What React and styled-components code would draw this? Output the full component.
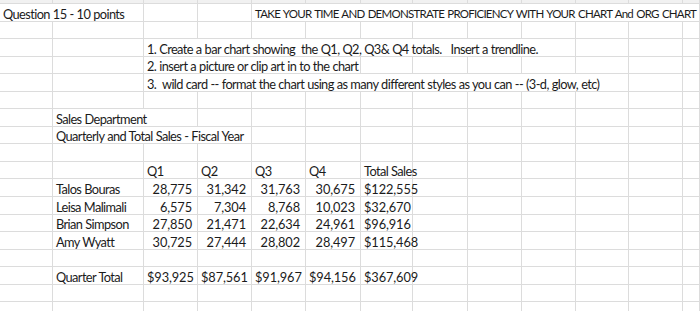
import styled, { createGlobalStyle } from "styled-components";

const GlobalStyle = createGlobalStyle`
  html, body {
    margin: 0;
    padding: 0;
    background: #ffffff;
  }
  body {
    font-family: Lato, "Liberation Sans", sans-serif;
    color: #1b1b1b;
  }
`;

const COLS = [53, 91, 54, 54, 54, 55, 52, 55, 54, 54, 53, 54, 17];

const Sheet = styled.div`
  width: 700px;
  height: 311px;
  overflow: hidden;
  display: grid;
  grid-template-columns: ${COLS.map((w) => w + "px").join(" ")};
  grid-template-rows: 4px;
  grid-auto-rows: 17.55px;
  background: #ffffff;
`;

const spacing = (p) => {
  if (p.$num) return "-0.1px";
  if (p.$caps) return "-0.75px";
  return "-0.6px";
};

const Cell = styled.div`
  grid-column: span ${(p) => p.$span || 1};
  box-sizing: border-box;
  border-right: 1px solid #dcdcdc;
  border-bottom: 1px solid #dcdcdc;
  background: ${(p) => (p.$strip ? "#f1f1f1" : "transparent")};
  display: flex;
  align-items: flex-end;
  justify-content: ${(p) => (p.$align === "right" ? "flex-end" : "flex-start")};
  padding: ${(p) => (p.$align === "right" ? "0 5px 0 0" : "0 0 0 3px")};
  font-size: ${(p) => (p.$caps ? "11.5px" : "12.8px")};
  line-height: 14px;
  letter-spacing: ${spacing};
  word-spacing: ${(p) => (p.$caps ? "1px" : "0.3px")};
  white-space: pre;
  overflow: visible;
`;

const names = [
  ["Talos Bouras", "28,775", "31,342", "31,763", "30,675", "$122,555"],
  ["Leisa Malimali", "6,575", "7,304", "8,768", "10,023", "$32,670"],
  ["Brian Simpson", "27,850", "21,471", "22,634", "24,961", "$96,916"],
  ["Amy Wyatt", "30,725", "27,444", "28,802", "28,497", "$115,468"],
];

const blank = (n) => Array.from({ length: n }, () => ({}));

const rows = [
  [
    { span: 2, text: "Question 15 - 10 points" },
    {},
    {},
    { span: 9, caps: true, text: "TAKE YOUR TIME AND DEMONSTRATE PROFICIENCY WITH YOUR CHART And ORG CHART" },
  ],
  blank(13),
  [{}, {}, { span: 8, text: "1. Create a bar chart showing  the Q1, Q2, Q3& Q4 totals.   Insert a trendline." }, ...blank(3)],
  [{}, {}, { span: 4, text: "2. insert a picture or clip art in to the chart" }, ...blank(7)],
  [{}, {}, { span: 9, text: "3.  wild card -- format the chart using as many different styles as you can -- (3-d, glow, etc)" }, ...blank(2)],
  blank(13),
  [{}, { span: 2, text: "Sales Department" }, ...blank(10)],
  [{}, { span: 3, text: "Quarterly and Total Sales - Fiscal Year" }, ...blank(9)],
  blank(13),
  [{}, {}, { text: "Q1" }, { text: "Q2" }, { text: "Q3" }, { text: "Q4" }, { text: "Total Sales" }, ...blank(6)],
  ...names.map(([name, q1, q2, q3, q4, total]) => [
    {},
    { text: name },
    { text: q1, align: "right", num: true },
    { text: q2, align: "right", num: true },
    { text: q3, align: "right", num: true },
    { text: q4, align: "right", num: true },
    { text: total, num: true },
    ...blank(6),
  ]),
  blank(13),
  [
    {},
    { text: "Quarter Total" },
    ...["$93,925", "$87,561", "$91,967", "$94,156", "$367,609"].map((t) => ({ text: t, num: true })),
    ...blank(6),
  ],
  blank(13),
  blank(13),
];

export default function App() {
  return (
    <>
      <GlobalStyle />
      <Sheet>
        {blank(13).map((_, i) => (
          <Cell key={"s" + i} $strip />
        ))}
        {rows.map((row, r) =>
          row.map((c, i) => (
            <Cell key={r + "-" + i} $span={c.span} $align={c.align} $num={c.num} $caps={c.caps}>
              {c.text}
            </Cell>
          ))
        )}
      </Sheet>
    </>
  );
}
